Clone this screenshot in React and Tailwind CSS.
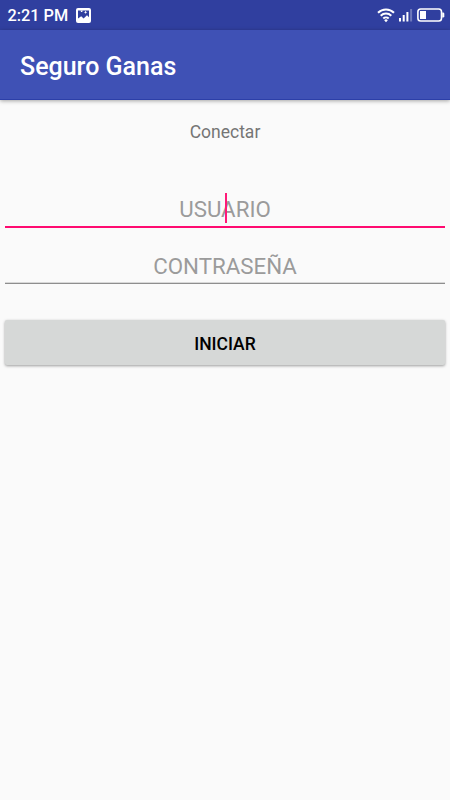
import { useState } from "react";

function StatusBar() {
  return (
    <div className="flex h-[30px] items-center bg-[#303f9f] pl-[7.5px] pr-[5px] text-white">
      <span className="pt-[2px] text-[16.3px] leading-none font-medium">2:21 PM</span>
      {/* Notificación de imagen */}
      <svg className="ml-[7.5px]" width="15" height="15" viewBox="0 0 15 15">
        <rect width="15" height="15" rx="2" fill="#fff" />
        <path d="M2 2.4h11v6.8l-2-2-3.4 3.4-2.4-2.4L2 10.6z" fill="#303f9f" />
        <path d="M9.6 2.6l.5 1.2 1.2.5-1.2.5-.5 1.2-.5-1.2-1.2-.5 1.2-.5zM4.6 2.4h2.2l-.6 1.5-1.2.2z" fill="#fff" />
      </svg>
      <div className="ml-auto flex items-center">
        <svg width="18" height="16" viewBox="0 0 18 16" fill="none" stroke="#fff" strokeWidth="2">
          <path d="M1 5.7a11.5 11.5 0 0 1 16 0" />
          <path d="M3.7 8.7a7.6 7.6 0 0 1 10.6 0" />
          <path d="M6.3 11.5a3.9 3.9 0 0 1 5.4 0" />
          <path d="M9 15.2 7.2 13.2a2.6 2.6 0 0 1 3.6 0z" fill="#fff" stroke="none" />
        </svg>
        <svg className="ml-[4px]" width="14" height="14" viewBox="0 0 14 14" fill="#fff">
          <rect x="0" y="10" width="2" height="3.5" />
          <rect x="3.7" y="7" width="2" height="6.5" />
          <rect x="7.4" y="4" width="2" height="9.5" />
          <rect x="11.1" y="1" width="2" height="12.5" fillOpacity="0.3" />
        </svg>
        <svg className="ml-[4px]" width="28" height="14" viewBox="0 0 28 14">
          <rect x="0.9" y="1" width="23.6" height="12" rx="2.8" fill="none" stroke="#fff" strokeWidth="1.6" />
          <rect x="3" y="3" width="6" height="8" fill="#fff" />
          <path d="M25.2 4.5h.8q1.3 0 1.3 1.3v2.4q0 1.3-1.3 1.3h-.8z" fill="#fff" />
        </svg>
      </div>
    </div>
  );
}

function App() {
  const [usuario, setUsuario] = useState("");
  const [clave, setClave] = useState("");

  return (
    <div className="h-[800px] w-[450px] overflow-hidden bg-[#fafafa] font-['Roboto',sans-serif]">
      <StatusBar />

      {/* Barra de la aplicación */}
      <header className="flex h-[70px] items-center border-b border-[#2c3fa8] bg-[#3f51b5] pl-5 pt-[3px] shadow-[0_1px_4px_rgba(0,0,0,0.35)]">
        <h1 className="text-[25px] leading-none font-medium text-white">Seguro Ganas</h1>
      </header>

      <main className="flex flex-col px-[5px]">
        <p className="mt-5 text-center text-[17.5px] leading-6 text-[#757575]">Conectar</p>

        <div className="relative mt-[44px] flex h-[40px] border-b-2 border-[#ff0a70]">
          <input
            type="text"
            value={usuario}
            onChange={(e) => setUsuario(e.target.value)}
            placeholder="USUARIO"
            className="w-full pt-1.5 text-center text-[22.3px] outline-none placeholder:text-[#9b9b9b]"
          />
          {/* Cursor */}
          <span className="absolute left-[219.5px] top-[5px] h-[30px] w-[2px] bg-[#ff1a78]" />
        </div>

        <div className="mt-[16px] flex h-[40px] border-b border-[#8e8e8e] shadow-[inset_0_-1px_0_#d8d8d8]">
          <input
            type="password"
            value={clave}
            onChange={(e) => setClave(e.target.value)}
            placeholder="CONTRASEÑA"
            className="w-full pt-1.5 text-center text-[22.3px] outline-none placeholder:text-[#9b9b9b]"
          />
        </div>

        <button className="mt-[36px] h-[45px] rounded-[2px] bg-[#d6d8d7] pt-[3px] text-[17.5px] font-medium text-black shadow-[0_1px_3px_rgba(0,0,0,0.38)]">
          INICIAR
        </button>
      </main>
    </div>
  );
}

export default App;
